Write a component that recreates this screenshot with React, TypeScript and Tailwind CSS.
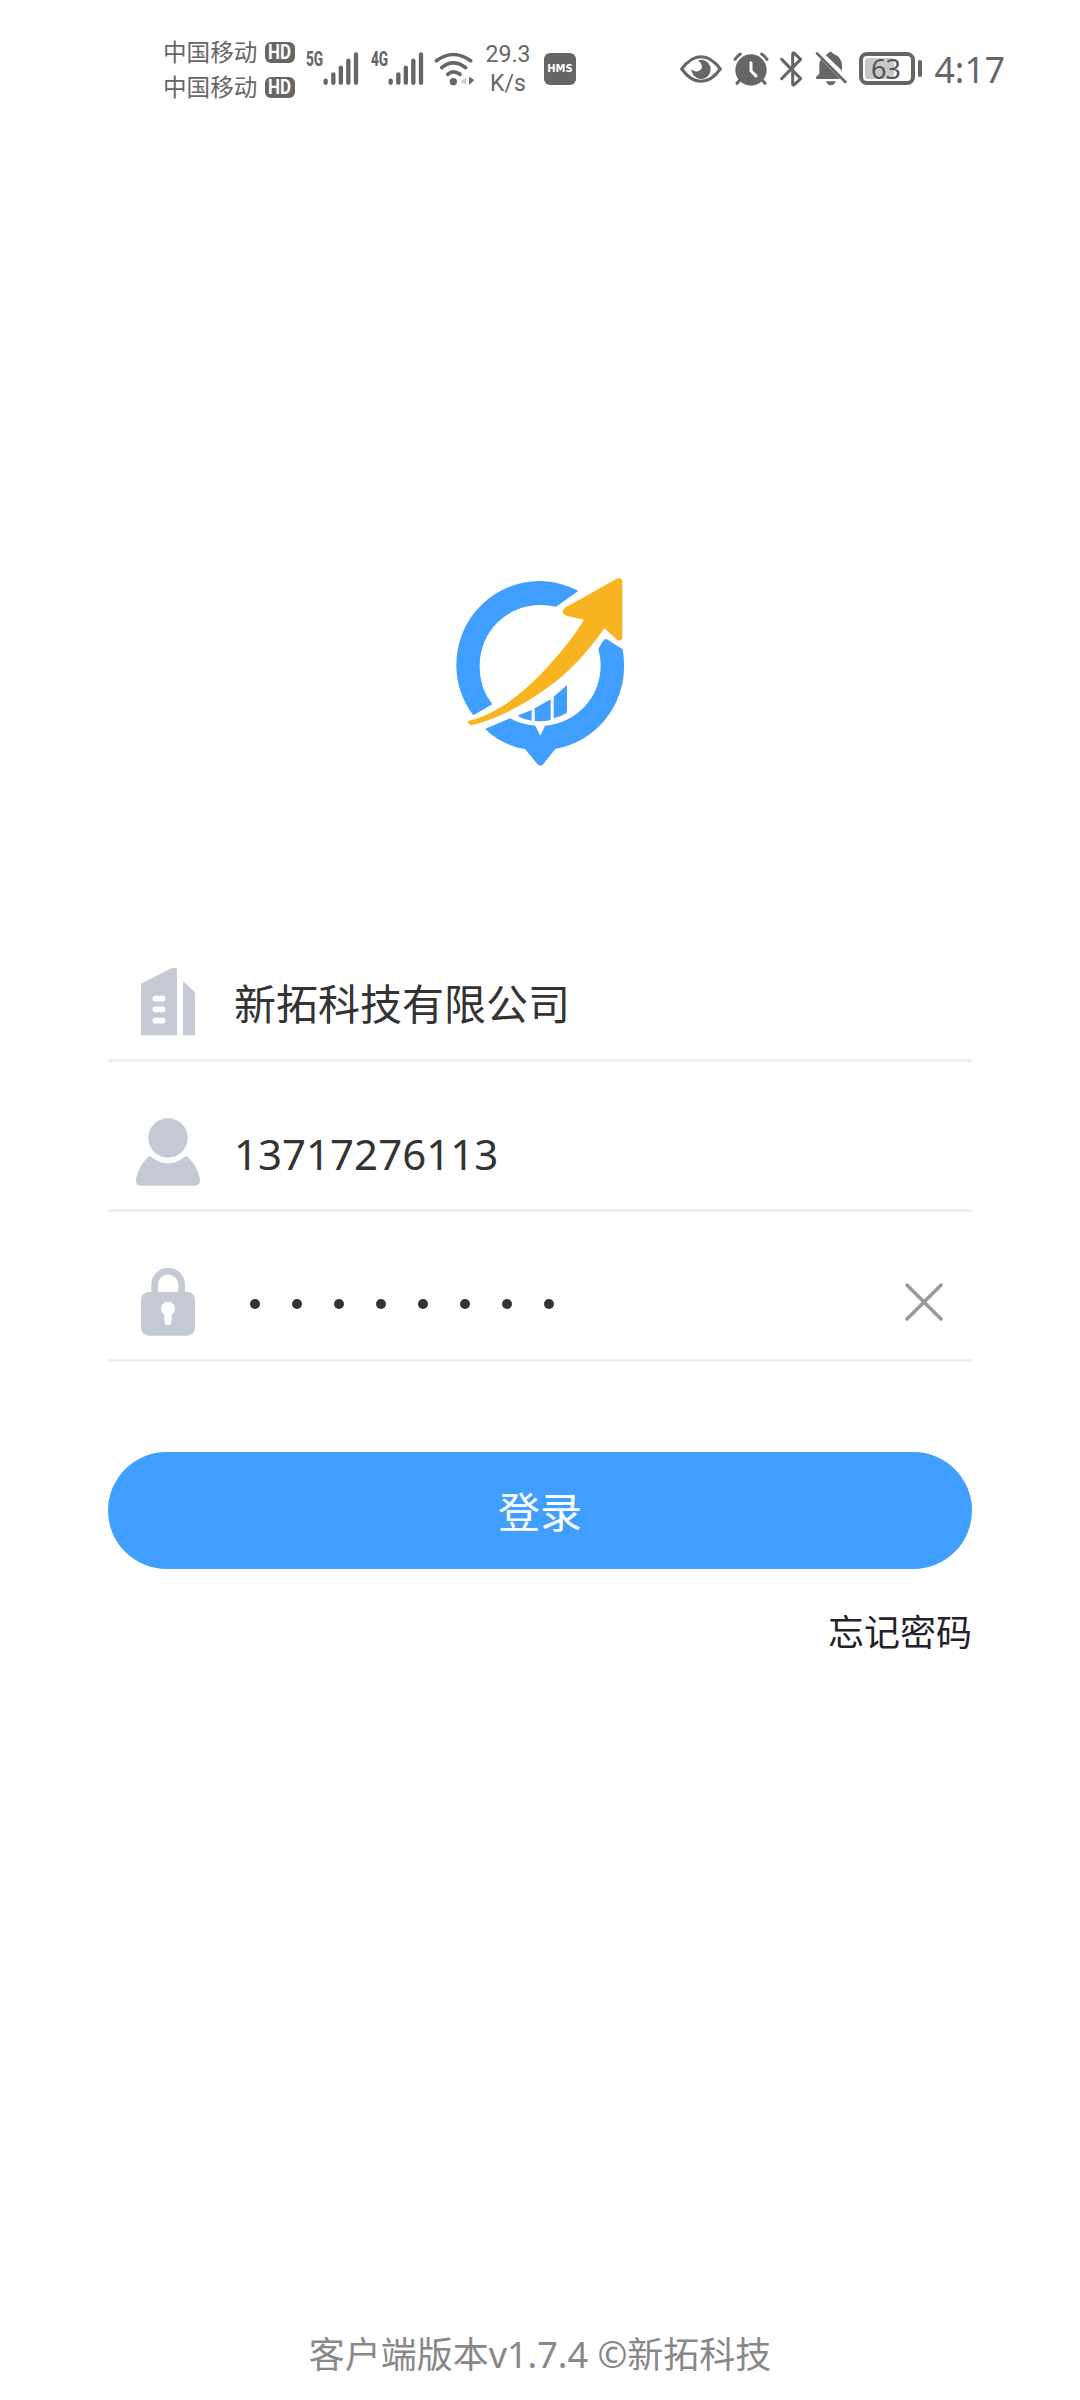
import React from 'react';

const SignalBars = () => (
  <svg width="36" height="33" viewBox="0 0 108 99" fill="none" stroke="#666666" strokeWidth="13" strokeLinecap="round">
    <path d="M8 86V92M31 67V92M53.500 47V92M76 26V92M99 7V92" />
  </svg>
);

const NetworkSignal = ({ label }: { label: string }) => (
  <div className="relative flex h-[34px] w-[53px] justify-end">
    <span className="absolute left-0 top-0 origin-left scale-x-[0.65] font-['Roboto'] text-[21px] font-extrabold leading-[15px] text-[#666666]">
      {label}
    </span>
    <SignalBars />
  </div>
);

const Carrier = () => (
  <div className="flex h-[35px] items-center">
    <span className="w-[102px] pt-[1px] text-[23.600px] leading-none text-[#666666]">中国移动</span>
    <span className="flex h-[21px] w-[30px] items-center justify-center rounded-[6px] bg-[#666666] text-white">
      <span className="scale-x-[0.85] font-['Roboto'] text-[20px] font-bold leading-none">HD</span>
    </span>
  </div>
);

const WifiIcon = () => (
  <svg width="41" height="34" viewBox="0 0 123 102" fill="none" stroke="#666666" strokeWidth="11" strokeLinecap="round">
    <path d="M7 26Q58 -11 110 26" />
    <path d="M23 47Q58 18 95 47" />
    <path d="M41 67Q58 52 78 67" />
    <circle cx="58" cy="89" r="11" fill="#666666" stroke="none" />
    <path d="M97 76V99L79 90Z" fill="#cfcfcf" stroke="none" />
    <path d="M105 74L121 84L105 99Z" fill="#666666" stroke="none" />
  </svg>
);

const EyeIcon = () => (
  <svg width="42" height="28" viewBox="0 0 126 84" fill="none">
    <path d="M5 42Q32 5 63 5Q94 5 121 42Q94 79 63 79Q32 79 5 42Z" stroke="#666666" strokeWidth="9" strokeLinejoin="round" />
    <path d="M66 14A29 29 0 1 1 34 41Q42 52 54 49Q72 43 63 25Q60 20 54 17Q60 14 66 14Z" fill="#666666" />
  </svg>
);

const AlarmIcon = () => (
  <svg width="36" height="34" viewBox="0 0 108 102" fill="none">
    <path d="M6 22Q12 13 22 6M86 6Q96 13 102 22" stroke="#666666" strokeWidth="9" strokeLinecap="round" />
    <path d="M20 85L12 94M88 85L96 94" stroke="#666666" strokeWidth="9" strokeLinecap="round" />
    <circle cx="54" cy="54" r="47" fill="#666666" />
    <path d="M54 32V56L69 72" stroke="white" strokeWidth="9" strokeLinecap="round" strokeLinejoin="round" />
  </svg>
);

const BluetoothIcon = () => (
  <svg width="23" height="36" viewBox="0 0 69 108" fill="none" stroke="#666666" strokeWidth="9" strokeLinecap="round" strokeLinejoin="round">
    <path d="M5 25L62 83L43 101Q38 105 38 98V10Q38 3 43 7L62 25L5 83" />
  </svg>
);

const BellOffIcon = () => (
  <svg width="32" height="35" viewBox="0 0 96 105">
    <path d="M17 25L76 84H5Q0 80 5 76L13 68V46Q13 35 17 25Z" fill="#666666" />
    <path d="M32 12L38 8Q47 -3 55 8Q81 18 81 44V59Z" fill="#666666" />
    <path d="M33 91H62Q58 103 48 103Q37 103 33 91Z" fill="#666666" />
    <path d="M6 7L91 93" stroke="#666666" strokeWidth="8" strokeLinecap="round" />
  </svg>
);

const StatusBar = () => (
  <div className="flex h-[137px] items-center pl-[163px] pr-[75px]">
    <div className="flex w-[143px] flex-col pt-[2px]">
      <Carrier />
      <Carrier />
    </div>
    <div className="flex items-center">
      <NetworkSignal label="5G" />
      <div className="ml-[12px]">
        <NetworkSignal label="4G" />
      </div>
      <div className="ml-[10px]">
        <WifiIcon />
      </div>
    </div>
    <div className="ml-[6px] flex w-[54px] flex-col items-center pt-[2px] font-['Roboto'] text-[23px] leading-[28.500px] text-[#666666]">
      <span>29.3</span>
      <span>K/s</span>
    </div>
    <div className="ml-[9px] flex h-[32px] w-[32px] items-center justify-center rounded-[6px] bg-[#666666] font-['DejaVu_Sans'] text-[10px] font-bold leading-none text-white">
      HMS
    </div>

    <div className="ml-auto flex items-center">
      <EyeIcon />
      <div className="ml-[11px]"><AlarmIcon /></div>
      <div className="ml-[11px]"><BluetoothIcon /></div>
      <div className="ml-[12px]"><BellOffIcon /></div>
      <div className="relative ml-[12px] flex h-[33px] w-[56px] items-center justify-center rounded-[8px] border-[4px] border-[#666666]">
        <span className="absolute left-[2px] top-[2px] h-[21px] w-[29px] rounded-[3px] bg-[#c8c8c8]" />
        <span className="relative -ml-[2px] text-[27px] leading-none tracking-[-1px] text-[#555555]">63</span>
      </div>
      <span className="ml-[3px] h-[17px] w-[4px] rounded-[2px] bg-[#666666]" />
      <span className="ml-[13px] pt-[2px] text-[35.500px] leading-none text-[#666666]">4:17</span>
    </div>
  </div>
);

const Logo = () => (
  <svg width="220" height="240" viewBox="0 0 660 720" className="mx-auto mt-[413px]">
    <g fill="#409eff">
      <path d="M445 123A251 251 0 0 0 331 93A251 251 0 0 0 79 344A251 251 0 0 0 130 496L187 463A181 181 0 0 1 149 346A181 181 0 0 1 331 165Q356 165 378 170Z" />
      <path d="M165 537C200 570 240 590 285 597L322 642Q331 652 340 642L376 597A251 251 0 0 0 582 344Q582 320 578 298L528 266Q519 268 505 298Q512 320 512 346A181 181 0 0 1 345 527L331 557L316 527Q275 525 240 505Z" />
      <path d="M262 497L305 480V512Q280 508 262 497Z" />
      <path d="M314 475L362 448V510Q340 516 314 513Z" />
      <path d="M371 440L411 405V488Q392 500 371 505Z" />
    </g>
    <path
      d="M115 513C195 495 265 440 330 375C385 317 430 262 462 209L412 198Q388 190 405 173L560 86Q577 80 577 97L577 262Q575 276 562 270L523 235C475 305 410 375 350 415C270 472 190 512 125 525Q112 524 115 513Z"
      fill="#f8b420"
    />
  </svg>
);

const CompanyIcon = () => (
  <svg width="54" height="68" viewBox="0 0 162 204" fill="#c4c9d3">
    <path d="M0 51Q0 47 4 45L88 2Q91 0 96 0H104Q108 0 108 4V202H0Z" />
    <path d="M126 44Q126 40 130 43L158 70Q162 74 162 79V202H126Z" />
    <path d="M43 92H65M43 124H65M43 158H65" stroke="white" strokeWidth="17" strokeLinecap="round" />
  </svg>
);

const UserIcon = () => (
  <svg width="64" height="68" viewBox="0 0 192 204" fill="#c4c9d3">
    <circle cx="96" cy="60" r="59" />
    <path d="M36 117Q41 113 46 117Q96 156 145 117Q150 113 155 117Q185 145 192 183Q193 203 178 203H14Q-2 203 0 183Q7 145 36 117Z" />
  </svg>
);

const LockIcon = () => (
  <svg width="54" height="68" viewBox="0 0 162 204">
    <path d="M41 80V50A40.500 40.500 0 0 1 122 50V80" fill="none" stroke="#c4c9d3" strokeWidth="20" />
    <rect y="72" width="162" height="131" rx="24" fill="#c4c9d3" />
    <path d="M81 101A21 21 0 0 1 93 139L91 164Q89 172 81 172Q73 172 71 164L69 139A21 21 0 0 1 81 101Z" fill="white" />
  </svg>
);

interface FieldProps {
  icon: React.ReactNode;
  children: React.ReactNode;
}

const Field: React.FC<FieldProps> = ({ icon, children }) => (
  <div className="flex h-[150px] items-center border-b-[3px] border-[#eeeeee] pl-[28px] pt-[33px] text-[42px] leading-none text-[#333333]">
    <div className="mr-[34px] flex w-[64px] justify-center">{icon}</div>
    {children}
  </div>
);

export default function App() {
  return (
    <div className="flex h-[2400px] w-[1080px] flex-col bg-white font-['Noto_Sans','Noto_Sans_CJK_SC',sans-serif]">
      <StatusBar />
      <Logo />

      {/* Login form */}
      <div className="mt-[122px] flex flex-col px-[108px]">
        <Field icon={<CompanyIcon />}>
          <span className="pt-[3px]">新拓科技有限公司</span>
        </Field>
        <Field icon={<UserIcon />}>
          <span className="pt-[3px]">13717276113</span>
        </Field>
        <Field icon={<LockIcon />}>
          <div className="ml-[16px] mt-[4px] flex gap-[32px]">
            {Array.from({ length: 8 }).map((_, i) => (
              <span key={i} className="h-[10px] w-[10px] rounded-full bg-[#333333]" />
            ))}
          </div>
          <svg width="38" height="38" viewBox="0 0 38 38" className="ml-auto mr-[29px]" stroke="#999999" strokeWidth="3.500" strokeLinecap="round">
            <path d="M2 2L36 36M36 2L2 36" />
          </svg>
        </Field>

        <button className="mt-[90px] h-[117px] rounded-full bg-[#409eff] pt-[3px] text-[42px] leading-none text-white">登录</button>
        <a className="mt-[46px] self-end text-[36px] leading-none text-[#222228]">忘记密码</a>
      </div>

      <div className="mb-[27px] mt-auto text-center text-[36px] leading-none text-[#888888]">客户端版本v1.7.4 ©新拓科技</div>
    </div>
  );
}
